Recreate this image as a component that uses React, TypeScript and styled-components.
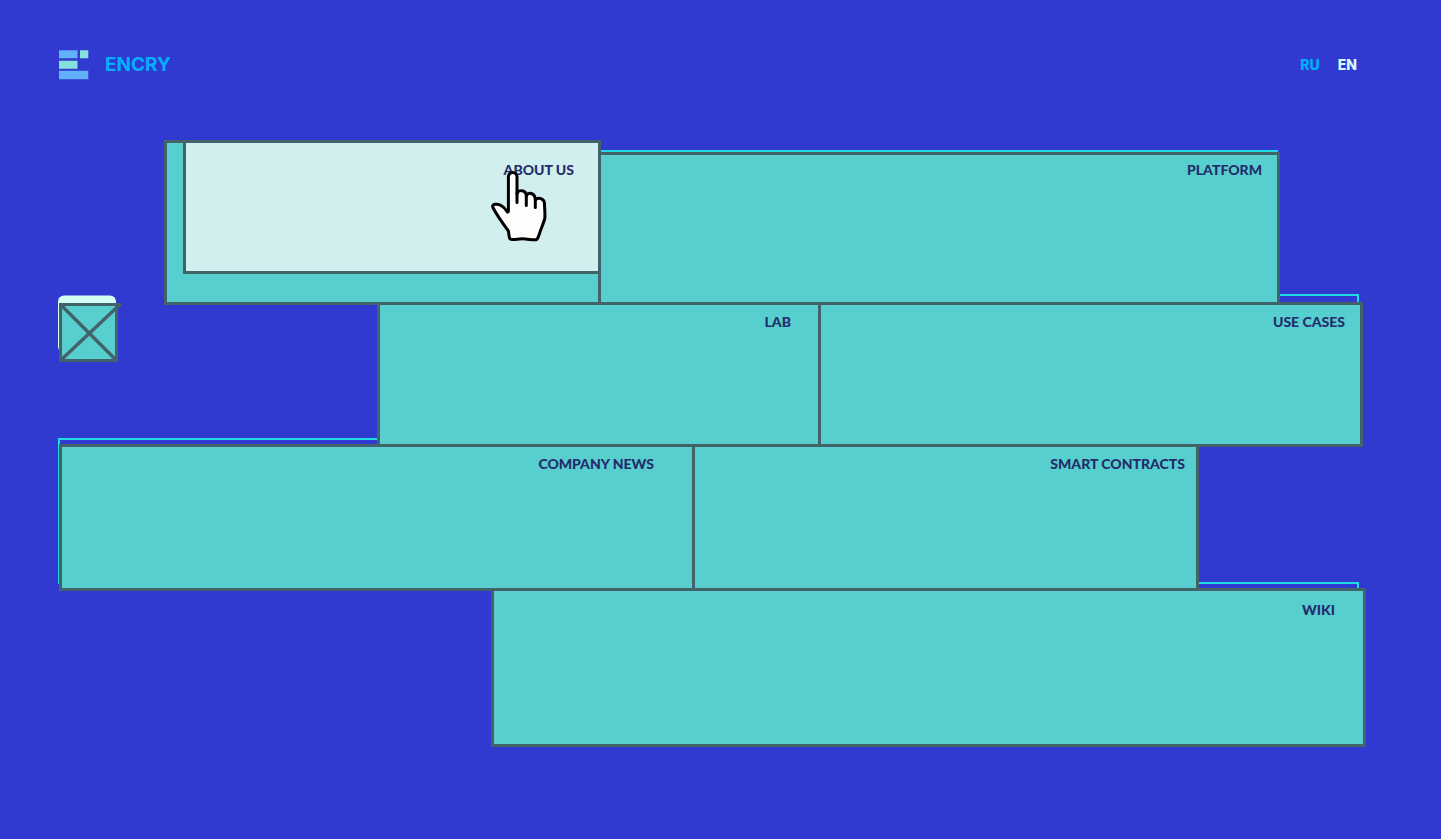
import React from 'react';
import styled, { createGlobalStyle, css } from 'styled-components';

const color = {
  page: '#303ad0',
  block: '#56cfce',
  active: '#d1efee',
  frame: '#436269',
  line: '#1cdde0',
  ink: '#242c6b',
  brand: '#00b0ff',
  mint: '#d4fff3',
};

const GlobalStyle = createGlobalStyle`
  *, *::before, *::after { box-sizing: border-box; }
  body {
    margin: 0;
    background: ${color.page};
    font-family: Lato, 'Liberation Sans', sans-serif;
  }
`;

const Page = styled.div`
  min-height: 100vh;
  padding: 50px 0 80px;
`;

const Header = styled.header`
  display: flex;
  align-items: center;
  justify-content: space-between;
  padding: 0 84px 0 59px;
`;

const Brand = styled.a`
  display: flex;
  align-items: center;
  gap: 16px;
  color: ${color.brand};
  font: 700 19px/30px Inter, sans-serif;
  text-decoration: none;
`;

const Logo = styled.svg`
  display: block;
  width: 30px;
  height: 30px;
`;

const Languages = styled.nav`
  display: flex;
  gap: 18px;
`;

const Language = styled.a<{ $current?: boolean }>`
  color: ${(p) => (p.$current ? '#d4f7fb' : color.brand)};
  font: 800 14px/20px Inter, sans-serif;
  text-decoration: none;
`;

const Menu = styled.nav`
  position: relative;
  z-index: 0;
  margin-top: 60px;
`;

const Row = styled.div<{ $columns: number[]; $height: number }>`
  display: grid;
  grid-template-columns: ${(p) => p.$columns.map((c) => `minmax(0, ${c}fr)`).join(' ')};
  min-height: ${(p) => p.$height}px;

  & + & {
    margin-top: -3px;
  }
`;

const Gutter = styled.div`
  padding-left: 58px;
`;

const frame = css`
  border: 3px solid ${color.frame};
  color: ${color.ink};
  font-size: 14px;
  font-weight: 900;
  line-height: 16px;
  text-align: right;
  text-decoration: none;
`;

const Block = styled.a<{ $top?: number; $right: number; $inset?: number }>`
  ${frame}
  position: relative;
  margin-top: ${(p) => p.$inset ?? 0}px;
  padding: ${(p) => p.$top ?? 9}px ${(p) => p.$right}px 0 0;
  background: ${color.block};

  & + & {
    margin-left: -3px;
  }
`;

const ActiveSlot = styled(Block)`
  padding: 0 0 28px 16px;
`;

const ActivePanel = styled.span`
  ${frame}
  position: relative;
  display: block;
  height: 134px;
  margin: -3px -3px 0 0;
  padding: 19px 24px 0 0;
  background: ${color.active};
`;

const Hand = styled.svg`
  position: absolute;
  top: 27px;
  right: 51px;
  width: 56px;
  height: 72px;
`;

const Outline = styled.span<{ $edges: string; $inset: string }>`
  position: absolute;
  z-index: -1;
  inset: ${(p) => p.$inset};
  border: solid ${color.line};
  border-width: ${(p) => p.$edges};
`;

const CloseButton = styled.button`
  display: block;
  margin-top: -7px;
  padding: 0;
  border: 0;
  background: none;
  cursor: pointer;

  svg {
    display: block;
  }
`;

export default function App() {
  return (
    <>
      <GlobalStyle />
      <Page>
        <Header>
          <Brand href="#home">
            <Logo viewBox="0 0 30 30" aria-hidden="true">
              <path d="M0 .3h18.5v8H0zM0 20.7h29.3v8.6H0z" fill="#62b0fa" />
              <path d="M21 .3h8.3v8H21zM0 10.8h18.5v8H0z" fill="#83e2dc" />
            </Logo>
            ENCRY
          </Brand>
          <Languages aria-label="Language">
            <Language href="#ru">RU</Language>
            <Language href="#en" $current>EN</Language>
          </Languages>
        </Header>

        <Menu aria-label="Sections">
          <Row $columns={[164, 437, 679, 161]} $height={165}>
            <Gutter />
            <ActiveSlot href="#about" $right={0}>
              <ActivePanel>
                ABOUT US
                <Hand viewBox="0 0 56 72" aria-hidden="true">
                  <path
                    d="M17.400 41V7C17.400 1 26 1 26 7v17c1-5 9.300-4.500 9.300 2 1.500-4.500 9-3.500 9 4 3-3.500 9-1.500 9.200 3.500 0 5 .8 10.500.3 15-1.300 5-3.800 10-5.300 15-.8 2.300-1.500 5.500-3.200 6.200-4 .6-8-.9-14-.9-4 0-8.500 1.200-11.500.6-2.500-1-1.500-6-2.500-8.600C13 55 6 45.500 1.900 37.500c-1.600-4 4.800-3.800 7.500-2.300 3.500 1.600 5.500 4.800 7 6.800.7 0 1-.4 1-1z"
                    fill="#fdfdfd"
                    stroke="#000"
                    strokeWidth="3"
                    strokeLinejoin="round"
                  />
                  <path
                    d="M26 23v9.500M35.300 26v9.500M44.300 30v7.500"
                    fill="none"
                    stroke="#000"
                    strokeWidth="3"
                    strokeLinecap="round"
                  />
                </Hand>
              </ActivePanel>
            </ActiveSlot>
            <Block href="#platform" $top={7} $right={15} $inset={12}>
              PLATFORM
              <Outline $inset="-5px -1px auto 0" $edges="2px 0 0" />
            </Block>
          </Row>

          <Row $columns={[377, 444, 542, 78]} $height={145}>
            <Gutter>
              <CloseButton type="button" aria-label="Close menu">
                <svg width="66" height="68" viewBox="0 0 66 68">
                  <rect x="0" y=".5" width="58" height="57" rx="6" fill={color.mint} />
                  <g fill={color.block} stroke={color.frame} strokeWidth="3">
                    <path d="M2.500 9.500h56v56h-56z" />
                    <path d="M3 10l55 55M3 65L63 8.500" strokeWidth="3.400" />
                  </g>
                </svg>
              </CloseButton>
            </Gutter>
            <Block href="#lab" $right={27}>LAB</Block>
            <Block href="#use-cases" $right={15}>
              USE CASES
              <Outline $inset="-11px 1px 0 50%" $edges="2px 2px 0 0" />
            </Block>
          </Row>

          <Row $columns={[59, 636, 504, 242]} $height={147}>
            <Gutter />
            <Block href="#news" $right={38}>
              COMPANY NEWS
              <Outline $inset="-9px 50% 4px -4px" $edges="2px 0 0 2px" />
            </Block>
            <Block href="#smart-contracts" $right={11}>SMART CONTRACTS</Block>
          </Row>

          <Row $columns={[491, 875, 75]} $height={159}>
            <Gutter />
            <Block href="#wiki" $top={11} $right={28}>
              WIKI
              <Outline $inset="-9px 4px 0 50%" $edges="2px 2px 0 0" />
            </Block>
          </Row>
        </Menu>
      </Page>
    </>
  );
}
